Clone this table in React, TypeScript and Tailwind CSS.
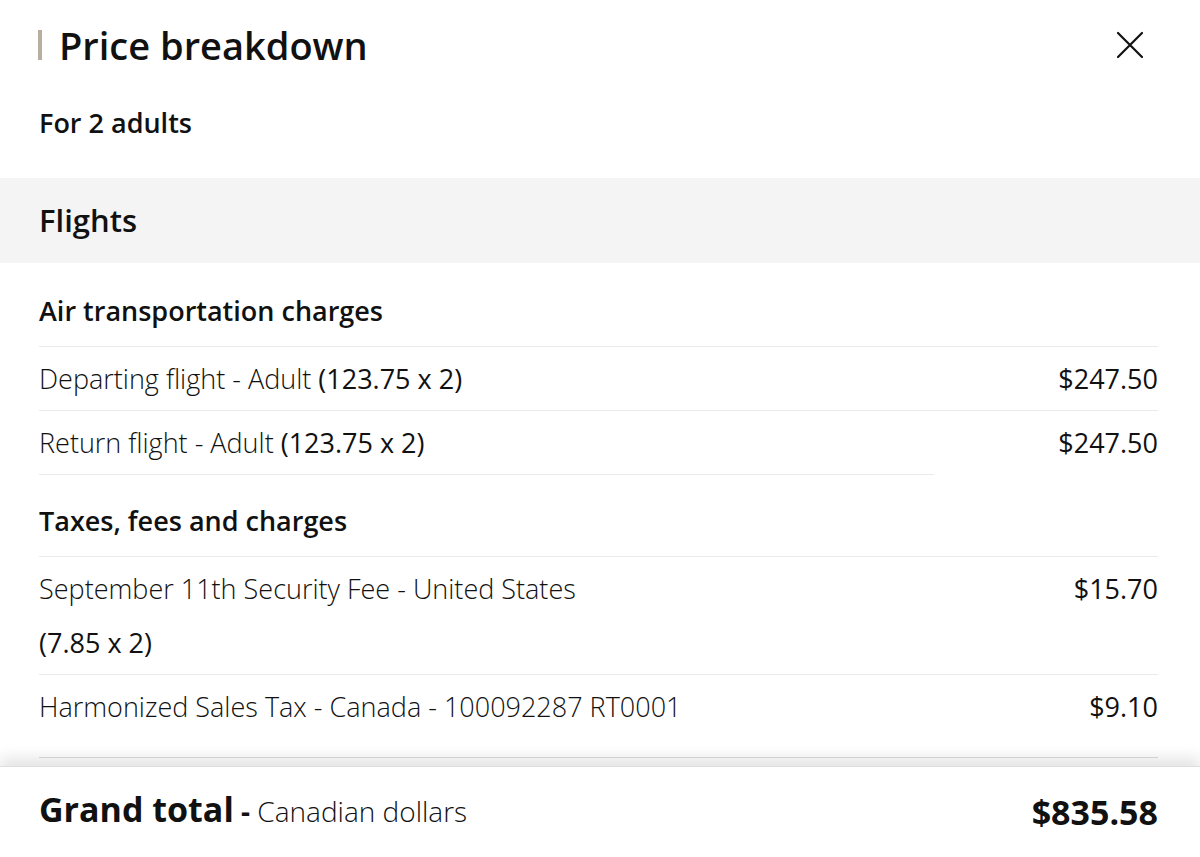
import React from 'react';

type Line = { id: number; label: string; qty?: string; qtyBreak?: boolean; price: string };

const airCharges: Line[] = [
  { id: 1, label: 'Departing flight - Adult', qty: '(123.75 x 2)', price: '$247.50' },
  { id: 2, label: 'Return flight - Adult', qty: '(123.75 x 2)', price: '$247.50' },
];

const taxes: Line[] = [
  { id: 3, label: 'September 11th Security Fee - United States', qty: '(7.85 x 2)', qtyBreak: true, price: '$15.70' },
  { id: 4, label: 'Harmonized Sales Tax - Canada - 100092287 RT0001', price: '$9.10' },
];

function Row({ line, last }: { line: Line; last?: boolean }) {
  return (
    <div className={`flex justify-between border-t border-[#ebebeb] pt-[15px] ${last ? 'pb-[34px]' : 'pb-[15px]'}`}>
      <div className="text-[27px] leading-[33px] font-light">
        {line.qtyBreak ? (
          <>
            <div>{line.label}</div>
            <div className="mt-[21px] font-normal">{line.qty}</div>
          </>
        ) : (
          <span>
            {line.label}
            {line.qty && <span className="font-normal"> {line.qty}</span>}
          </span>
        )}
      </div>
      <div className="text-[27px] leading-[33px]">{line.price}</div>
    </div>
  );
}

export default function App() {
  return (
    <div className="h-screen flex flex-col bg-white text-[#111] font-['Open_Sans',sans-serif]">
      <div className="flex-1 overflow-hidden">
        {/* Header */}
        <div className="flex items-center justify-between pl-[38px] pr-[56px] pt-[20px]">
          <div className="flex items-center">
            <div className="w-[4px] h-[30px] bg-[#b9ad9f]" />
            <h1 className="ml-[17px] text-[38px] leading-[50px] font-semibold">Price breakdown</h1>
          </div>
          <button className="w-[28px] h-[28px] flex items-center justify-center">
            <svg width="28" height="28" viewBox="0 0 28 28" fill="none" stroke="#111" strokeWidth="2.2" strokeLinecap="round">
              <path d="M2 2L26 26M26 2L2 26" />
            </svg>
          </button>
        </div>

        <p className="px-[39px] mt-[35px] text-[27px] leading-[36px] font-semibold">For 2 adults</p>

        {/* Flights band */}
        <div className="mt-[37px] h-[85px] bg-[#f4f4f4] flex items-center px-[39px]">
          <h2 className="text-[31px] font-semibold">Flights</h2>
        </div>

        <div className="pl-[39px] pr-[42px]">
          <h3 className="pt-[30px] pb-[17px] text-[27px] leading-[36px] font-semibold">Air transportation charges</h3>
          {airCharges.map((l) => (
            <Row key={l.id} line={l} />
          ))}
          <div className="w-[895px] border-t border-[#ebebeb]" />

          <h3 className="pt-[28px] pb-[17px] text-[27px] leading-[36px] font-semibold">Taxes, fees and charges</h3>
          {taxes.map((l, i) => (
            <Row key={l.id} line={l} last={i === taxes.length - 1} />
          ))}
          <div className="border-t border-[#dcdcdc]" />
        </div>
      </div>

      {/* Footer */}
      <div className="relative z-10 h-[91px] shrink-0 bg-white border-t border-[#dedede] shadow-[0_-8px_14px_rgba(0,0,0,0.11)] flex items-center justify-between pl-[39px] pr-[42px]">
        <p className="leading-[44px]">
          <span className="text-[34px] font-bold">Grand total</span>
          <span className="text-[28px] font-bold"> - </span>
          <span className="text-[28px] font-light">Canadian dollars</span>
        </p>
        <p className="text-[34px] leading-[44px] font-bold">$835.58</p>
      </div>
    </div>
  );
}
